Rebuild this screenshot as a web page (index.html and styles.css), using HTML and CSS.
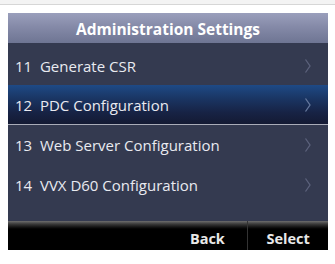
FILE: index.html
```html
<!DOCTYPE html>
<html>
<head>
<meta charset="utf-8">
<link rel="stylesheet" href="styles.css">
</head>
<body>
<div class="topbar"></div>
<div class="page">
  <div class="screen">
    <div class="header">Administration Settings</div>
    <div class="list">
      <div class="row first"><span class="label">11&nbsp; Generate CSR</span><svg class="chev" width="8" height="16" viewBox="0 0 8 16"><path d="M1.5 1.5 L6 8 L1.5 14.5" fill="none" stroke="currentColor" stroke-width="1.3"/></svg></div>
      <div class="row selected"><span class="label">12&nbsp; PDC Configuration</span><svg class="chev" width="8" height="16" viewBox="0 0 8 16"><path d="M1.5 1.5 L6 8 L1.5 14.5" fill="none" stroke="currentColor" stroke-width="1.3"/></svg></div>
      <div class="row"><span class="label">13&nbsp; Web Server Configuration</span><svg class="chev" width="8" height="16" viewBox="0 0 8 16"><path d="M1.5 1.5 L6 8 L1.5 14.5" fill="none" stroke="currentColor" stroke-width="1.3"/></svg></div>
      <div class="row"><span class="label">14&nbsp; VVX D60 Configuration</span><svg class="chev" width="8" height="16" viewBox="0 0 8 16"><path d="M1.5 1.5 L6 8 L1.5 14.5" fill="none" stroke="currentColor" stroke-width="1.3"/></svg></div>
      <div class="filler"></div>
    </div>
    <div class="softkeys">
      <div class="key"></div>
      <div class="key"></div>
      <div class="key sep">Back</div>
      <div class="key">Select</div>
    </div>
  </div>
</div>
</body>
</html>
```

FILE: styles.css
```css
html, body {
  margin: 0;
  padding: 0;
  background: #ffffff;
}
body {
  width: 335px;
  height: 264px;
  overflow: hidden;
  font-family: "Open Sans", "Noto Sans", sans-serif;
}
.topbar {
  height: 4px;
  background: #f3f3f3;
  border-bottom: 1px solid #d6d6d6;
}
.page {
  padding: 8px 7px 0 8px;
}
.screen {
  width: 320px;
  height: 237px;
  display: flex;
  flex-direction: column;
  background: #343a50;
}
.header {
  height: 30px;
  display: flex;
  align-items: center;
  justify-content: center;
  color: #ffffff;
  font-weight: 700;
  font-size: 15.5px;
  background: linear-gradient(#9a9fbc 0%, #858aa8 45%, #6e7593 100%);
  padding-top: 2px;
  box-sizing: border-box;
}
.list {
  display: flex;
  flex-direction: column;
  flex: 1;
}
.row {
  height: 40px;
  display: flex;
  align-items: center;
  justify-content: space-between;
  padding: 0 16px 0 7px;
  color: #e9eaf0;
  font-size: 15px;
  box-sizing: border-box;
}
.row.first {
  height: 42px;
  padding-top: 4px;
}
.row.selected {
  background: linear-gradient(#1e4a86 0%, #1a3563 35%, #172345 70%, #141a33 100%);
  border-bottom: 1px solid #a9acb8;
}
.chev {
  color: #5c627c;
}
.row.selected .chev {
  color: #66789e;
}
.filler {
  flex: 1;
}
.softkeys {
  height: 29px;
  display: flex;
  background: linear-gradient(#6d6d6d 0px, #3a3a3a 3px, #141414 6px, #000000 8px);
}
.key {
  flex: 1;
  display: flex;
  align-items: center;
  justify-content: center;
  padding-top: 5px;
  color: #e8e8e8;
  font-weight: 700;
  font-size: 14.5px;
}
.key.sep {
  border-right: 1px solid #333333;
}
```
